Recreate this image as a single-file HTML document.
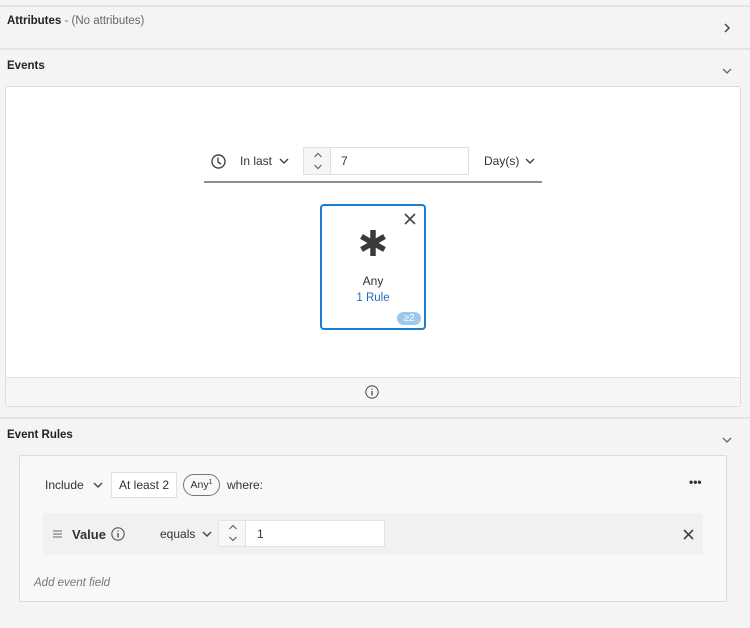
<!DOCTYPE html>
<html><head><style>
*{box-sizing:border-box;margin:0;padding:0}
body{width:750px;height:628px;background:#f4f4f4;font-family:"Liberation Sans",sans-serif;color:#2c2c2c;position:relative;overflow:hidden;font-size:12px}
.a{position:absolute}
.hl{position:absolute;left:0;width:750px;height:2px;background:#e4e4e4}
.t{font-weight:bold;font-size:11.5px;color:#222}
svg{position:absolute;overflow:visible}
</style></head><body>
<div class="hl" style="top:5px"></div>
<div class="a t" style="left:7px;top:15px">Attributes <span style="font-weight:normal;color:#666">- (No attributes)</span></div>
<svg style="left:723px;top:23px" width="8" height="10"><path d="M2 1 L6 5 L2 9" stroke="#444" stroke-width="1.5" fill="none"/></svg>
<div class="hl" style="top:48px"></div>
<div class="a t" style="left:7px;top:60px">Events</div>
<svg style="left:722px;top:68px" width="10" height="6"><path d="M1 1 L5 5 L9 1" stroke="#666" stroke-width="1.3" fill="none"/></svg>
<div class="a" style="left:5px;top:86px;width:736px;height:321px;background:#fff;border:1px solid #dcdcdc;border-radius:3px"></div>
<div class="a" style="left:6px;top:377px;width:734px;height:29px;background:#f6f6f6;border-top:1px solid #e2e2e2"></div>
<svg style="left:365px;top:385px" width="14" height="14"><circle cx="7" cy="7" r="6.2" stroke="#555" stroke-width="1.1" fill="none"/><path d="M7 6 V10.5 M7 3.6 V4.6" stroke="#555" stroke-width="1.4"/></svg>
<svg style="left:211px;top:154px" width="15" height="15"><circle cx="7.5" cy="7.5" r="6.5" stroke="#444" stroke-width="1.4" fill="none"/><path d="M7 3.5 V8 L10 10" stroke="#444" stroke-width="1.4" fill="none"/></svg>
<div class="a" style="left:240px;top:154px;font-size:12px;color:#333">In last</div>
<svg style="left:279px;top:158px" width="10" height="6"><path d="M1 1 L5 5 L9 1" stroke="#444" stroke-width="1.4" fill="none"/></svg>
<div class="a" style="left:303px;top:147px;width:166px;height:28px;border:1px solid #e0e0e0;background:#fff"></div>
<div class="a" style="left:304px;top:148px;width:27px;height:26px;background:#f5f5f5;border-right:1px solid #e0e0e0"></div>
<svg style="left:313px;top:152px" width="10" height="18"><path d="M1.5 5 L5 1.5 L8.5 5 M1.5 13 L5 16.5 L8.5 13" stroke="#666" stroke-width="1.2" fill="none"/></svg>
<div class="a" style="left:341px;top:154px;color:#333">7</div>
<div class="a" style="left:484px;top:154px;color:#333">Day(s)</div>
<svg style="left:525px;top:158px" width="10" height="6"><path d="M1 1 L5 5 L9 1" stroke="#444" stroke-width="1.4" fill="none"/></svg>
<div class="a" style="left:204px;top:181px;width:338px;height:2px;background:#8e8e8e"></div>
<div class="a" style="left:320px;top:204px;width:106px;height:126px;border:2px solid #1a7fd4;border-radius:4px;background:#fff"></div>
<svg style="left:404px;top:213px" width="12" height="12"><path d="M1 1 L11 11 M11 1 L1 11" stroke="#444" stroke-width="1.6"/></svg>
<svg style="left:359px;top:229px" width="28" height="28"><g stroke="#3a3a3a" stroke-width="5.5"><path d="M14 1 V27"/><path d="M2.5 7.5 L25.5 20.5"/><path d="M2.5 20.5 L25.5 7.5"/></g></svg>
<div class="a" style="left:320px;top:274px;width:106px;text-align:center;font-size:12px;color:#333">Any</div>
<div class="a" style="left:320px;top:292px;width:106px;text-align:center;font-size:11.5px;color:#1f6fb4">1 Rule</div>
<div class="a" style="left:397px;top:312px;width:24px;height:13px;background:#9cc8ee;border-radius:7px;color:#fff;font-size:10px;text-align:center;line-height:13px">≥2</div>
<div class="hl" style="top:417px"></div>
<div class="a t" style="left:7px;top:429px">Event Rules</div>
<svg style="left:722px;top:437px" width="10" height="6"><path d="M1 1 L5 5 L9 1" stroke="#666" stroke-width="1.3" fill="none"/></svg>
<div class="a" style="left:19px;top:455px;width:708px;height:147px;background:#f8f8f8;border:1px solid #dcdcdc;border-radius:2px"></div>
<div class="a" style="left:45px;top:478px;color:#333">Include</div>
<svg style="left:93px;top:482px" width="10" height="6"><path d="M1 1 L5 5 L9 1" stroke="#444" stroke-width="1.4" fill="none"/></svg>
<div class="a" style="left:111px;top:472px;width:66px;height:26px;border:1px solid #e0e0e0;background:#fff;color:#333;text-align:center;line-height:24px">At least 2</div>
<div class="a" style="left:183px;top:474px;width:37px;height:22px;border:1px solid #777;border-radius:11px;font-size:10.5px;color:#333;text-align:center;line-height:20px">Any<span style="font-size:7px;position:relative;top:-4px">1</span></div>
<div class="a" style="left:227px;top:478px;color:#333">where:</div>
<div class="a" style="left:689px;top:475px;font-weight:bold;color:#333">•••</div>
<div class="a" style="left:43px;top:513px;width:660px;height:42px;background:#f1f1f1;border-radius:2px"></div>
<svg style="left:53px;top:530px" width="9" height="8"><path d="M0 1 H9 M0 4 H9 M0 7 H9" stroke="#666" stroke-width="1"/></svg>
<div class="a" style="left:72px;top:527px;font-size:13px;font-weight:bold;color:#333">Value</div>
<svg style="left:111px;top:527px" width="14" height="14"><circle cx="7" cy="7" r="6.2" stroke="#555" stroke-width="1.1" fill="none"/><path d="M7 6 V10.5 M7 3.6 V4.6" stroke="#555" stroke-width="1.4"/></svg>
<div class="a" style="left:160px;top:527px;color:#333">equals</div>
<svg style="left:202px;top:531px" width="10" height="6"><path d="M1 1 L5 5 L9 1" stroke="#444" stroke-width="1.4" fill="none"/></svg>
<div class="a" style="left:218px;top:520px;width:167px;height:27px;border:1px solid #e4e4e4;background:#fff"></div>
<div class="a" style="left:219px;top:521px;width:27px;height:25px;background:#f7f7f7;border-right:1px solid #e4e4e4"></div>
<svg style="left:228px;top:524px" width="10" height="18"><path d="M1.5 5 L5 1.5 L8.5 5 M1.5 13 L5 16.5 L8.5 13" stroke="#666" stroke-width="1.2" fill="none"/></svg>
<div class="a" style="left:257px;top:527px;color:#333">1</div>
<svg style="left:683px;top:529px" width="11" height="11"><path d="M1 1 L10 10 M10 1 L1 10" stroke="#444" stroke-width="1.6"/></svg>
<div class="a" style="left:34px;top:577px;font-style:italic;color:#777;font-size:11.5px">Add event field</div>
</body></html>
